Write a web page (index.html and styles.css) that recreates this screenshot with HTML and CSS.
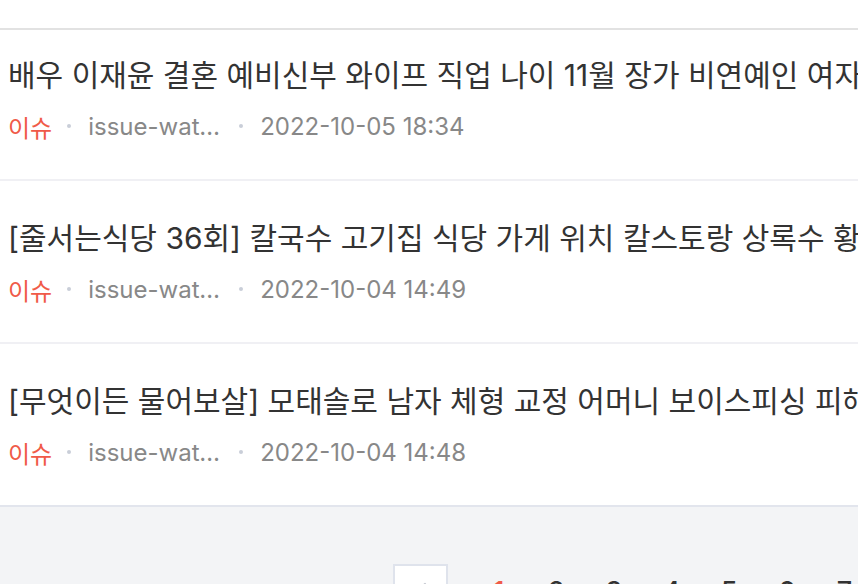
FILE: index.html
```html
<!DOCTYPE html>
<html lang="ko">
<head>
<meta charset="utf-8">
<link rel="stylesheet" href="styles.css">
</head>
<body>
<div class="top"></div>
<ul class="list">
  <li class="item first">
    <div class="title">배우 이재윤 결혼 예비신부 와이프 직업 나이 11월 장가 비연예인 여자 친구 누구</div>
    <div class="meta"><span class="cat">이슈</span><span class="dot"></span><span class="author">issue-watcher</span><span class="dot"></span><span class="date">2022-10-05 18:34</span></div>
  </li>
  <li class="item">
    <div class="title">[줄서는식당 36회] 칼국수 고기집 식당 가게 위치 칼스토랑 상록수 황금</div>
    <div class="meta"><span class="cat">이슈</span><span class="dot"></span><span class="author">issue-watcher</span><span class="dot"></span><span class="date">2022-10-04 14:49</span></div>
  </li>
  <li class="item last">
    <div class="title">[무엇이든 물어보살] 모태솔로 남자 체형 교정 어머니 보이스피싱 피해</div>
    <div class="meta"><span class="cat">이슈</span><span class="dot"></span><span class="author">issue-watcher</span><span class="dot"></span><span class="date">2022-10-04 14:48</span></div>
  </li>
</ul>
<div class="pager-area">
  <div class="pager">
    <span class="prev"><svg width="12" height="20" viewBox="0 0 12 20"><path d="M10 2 L2 10 L10 18" fill="none" stroke="#c4c7cf" stroke-width="2.2" stroke-linecap="round" stroke-linejoin="round"/></svg></span>
    <span class="num current">1</span>
    <span class="num">2</span>
    <span class="num">3</span>
    <span class="num">4</span>
    <span class="num">5</span>
    <span class="num">6</span>
    <span class="num">7</span>
  </div>
</div>
</body>
</html>
```

FILE: styles.css
```css
html, body {
  margin: 0;
  padding: 0;
  background: #ffffff;
  font-family: "Inter", "Noto Sans CJK KR", sans-serif;
  overflow: hidden;
}
.top {
  height: 28px;
  border-bottom: 2px solid #e2e2e2;
}
.list {
  list-style: none;
  margin: 0;
  padding: 0;
}
.item {
  padding: 37px 0 37px 8px;
  border-bottom: 2px solid #f0f0f4;
  display: flex;
  flex-direction: column;
  gap: 15px;
  overflow: hidden;
}
.item.first {
  padding-top: 25px;
}
.item.last {
  border-bottom-color: #e2e5ed;
}
.title {
  font-size: 30px;
  line-height: 40px;
  color: #333333;
  white-space: nowrap;
  letter-spacing: 0;
}
.meta {
  display: flex;
  align-items: center;
  height: 32px;
  font-size: 24px;
  color: #888888;
  white-space: nowrap;
}
.cat {
  color: #f05a48;
}
.dot {
  flex-shrink: 0;
  width: 4px;
  height: 4px;
  border-radius: 50%;
  background: #c9ced8;
  margin: 0 17px 0 15px;
}
.author {
  display: inline-block;
  flex-shrink: 0;
  width: 136px;
  overflow: hidden;
  text-overflow: ellipsis;
}
.pager-area {
  background: #f3f4f6;
  height: 200px;
  padding-top: 56px;
}
.pager {
  display: flex;
  align-items: center;
  padding-left: 393px;
}
.prev {
  flex-shrink: 0;
  box-sizing: border-box;
  width: 55px;
  height: 55px;
  background: #ffffff;
  border: 2px solid #dfe3ec;
  display: flex;
  align-items: center;
  justify-content: center;
  margin-right: 22px;
}
.num {
  flex-shrink: 0;
  width: 57.6px;
  text-align: center;
  font-size: 27px;
  line-height: 57px;
  color: #333333;
  font-weight: 500;
}
.num.current {
  color: #f05a48;
}
```
